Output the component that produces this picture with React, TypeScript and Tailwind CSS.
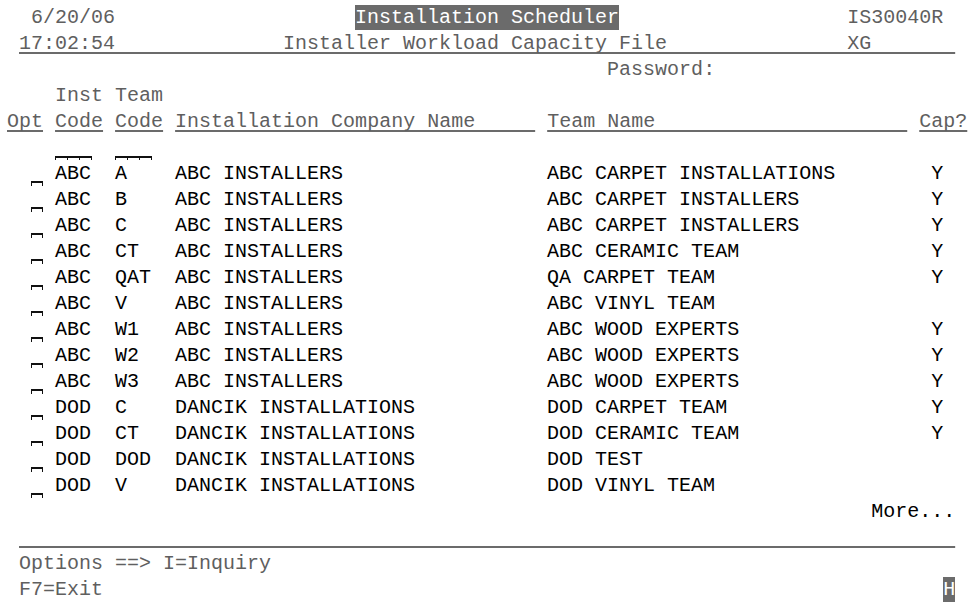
import React from "react"

// 80x24 5250-style screen: every cell is 12px wide, every row 26px high
const rows = [
  ["ABC", "A", "ABC INSTALLERS", "ABC CARPET INSTALLATIONS", "Y"],
  ["ABC", "B", "ABC INSTALLERS", "ABC CARPET INSTALLERS", "Y"],
  ["ABC", "C", "ABC INSTALLERS", "ABC CARPET INSTALLERS", "Y"],
  ["ABC", "CT", "ABC INSTALLERS", "ABC CERAMIC TEAM", "Y"],
  ["ABC", "QAT", "ABC INSTALLERS", "QA CARPET TEAM", "Y"],
  ["ABC", "V", "ABC INSTALLERS", "ABC VINYL TEAM", ""],
  ["ABC", "W1", "ABC INSTALLERS", "ABC WOOD EXPERTS", "Y"],
  ["ABC", "W2", "ABC INSTALLERS", "ABC WOOD EXPERTS", "Y"],
  ["ABC", "W3", "ABC INSTALLERS", "ABC WOOD EXPERTS", "Y"],
  ["DOD", "C", "DANCIK INSTALLATIONS", "DOD CARPET TEAM", "Y"],
  ["DOD", "CT", "DANCIK INSTALLATIONS", "DOD CERAMIC TEAM", "Y"],
  ["DOD", "DOD", "DANCIK INSTALLATIONS", "DOD TEST", ""],
  ["DOD", "V", "DANCIK INSTALLATIONS", "DOD VINYL TEAM", ""],
]

const pad = (s: string, n: number) => s.padEnd(n, " ")

const ul = "underline decoration-2 underline-offset-[3px] decoration-[#6b6b6b] [text-decoration-skip-ink:none]"

function Line({ children }: { children?: React.ReactNode }) {
  return <div className="h-[26px] leading-[26px] whitespace-pre">{children}</div>
}

function OptMark() {
  return (
    <span className="inline-flex h-[26px] w-[12px] items-end pb-[1px] align-top">
      <span className="h-[5px] w-[13px] border-x border-t-2 border-[#111]" />
    </span>
  )
}

function FieldMark({ n }: { n: number }) {
  return (
    <span className="inline-flex h-[26px] items-end pb-[1px] align-top" style={{ width: n * 12 }}>
      <span className="flex h-[4px]">
        {Array.from({ length: n }).map((_, i) => (
          <span
            key={i}
            className={`h-[4px] w-[12px] border-l border-t-2 border-[#111] ${i === n - 1 ? "border-r w-[13px]" : ""}`}
          />
        ))}
      </span>
    </span>
  )
}

function Reverse({ children }: { children: React.ReactNode }) {
  return (
    <span className="inline-block h-[25px] bg-[#6b6b6b] align-top leading-[25px] text-white">{children}</span>
  )
}

export default function App() {
  return (
    <div className="h-[613px] w-[971px] overflow-hidden bg-white pl-[7px] pt-[5px] font-['Liberation_Mono',monospace] text-[20px] text-[#5f5f5f]">
      <Line>
        {"  6/20/06" + " ".repeat(20)}
        <Reverse>Installation Scheduler</Reverse>
        {" ".repeat(19)}IS30040R
      </Line>
      <Line>
        {" "}
        <span className={ul}>
          {pad("17:02:54" + " ".repeat(14) + "Installer Workload Capacity File", 69) + pad("XG", 9)}
        </span>
      </Line>
      <Line>{" ".repeat(50)}Password:</Line>
      <Line>{"    Inst Team"}</Line>
      <Line>
        <span className={ul}>Opt</span> <span className={ul}>Code</span> <span className={ul}>Code</span>{" "}
        <span className={ul}>{pad("Installation Company Name", 30)}</span>
        {" "}
        <span className={ul}>{pad("Team Name", 30)}</span>
        {" "}
        <span className={ul}>Cap?</span>
      </Line>
      <Line>
        {"    "}
        <FieldMark n={3} />
        {"  "}
        <FieldMark n={3} />
      </Line>
      {rows.map((r, i) => (
        <Line key={i}>
          {"  "}
          <OptMark />
          <span className="text-black">
            {" " + pad(r[0], 5) + pad(r[1], 5) + pad(r[2], 31) + pad(r[3], 32) + r[4]}
          </span>
        </Line>
      ))}
      <Line>
        <span className="text-black">{" ".repeat(72)}More...</span>
      </Line>
      <Line>
        {" "}
        <span className={ul}>{" ".repeat(78)}</span>
      </Line>
      <Line>{" Options ==> I=Inquiry"}</Line>
      <Line>
        {" F7=Exit" + " ".repeat(70)}
        <Reverse>H</Reverse>
      </Line>
    </div>
  )
}
